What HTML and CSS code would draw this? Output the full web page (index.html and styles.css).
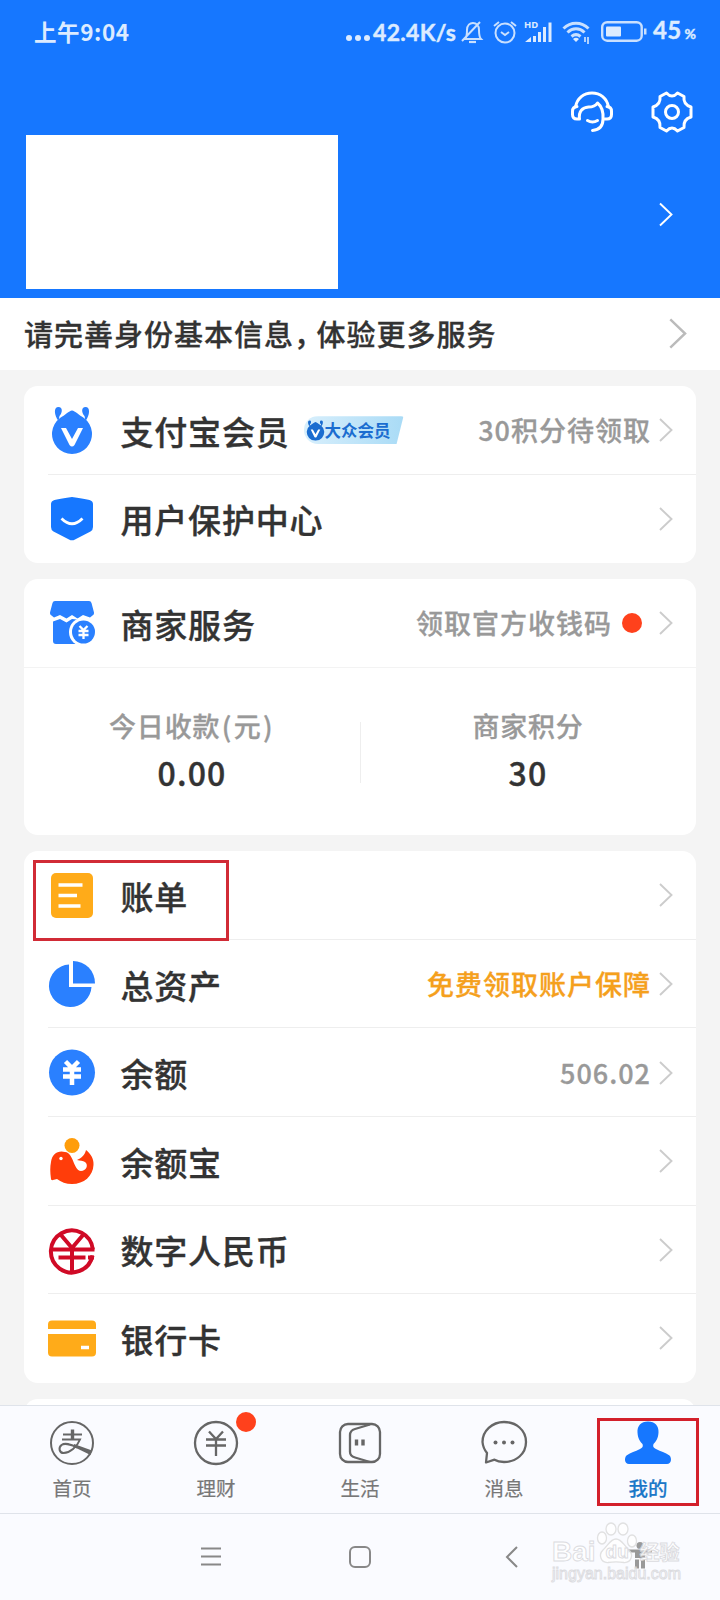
FILE: index.html
```html
<!DOCTYPE html>
<html lang="zh-CN">
<head>
<meta charset="utf-8">
<title>我的</title>
<link rel="stylesheet" href="styles.css">
</head>
<body>
<svg class="defs" width="0" height="0">
  <symbol id="chev" viewBox="0 0 14 24"><path d="M1 1l11.500 11L1 23" fill="none" stroke="currentColor" stroke-width="1.900"/></symbol>
  <symbol id="ant" viewBox="0 0 48 48"><path d="M10.500 15C6 9 5.500 1 10.500 1c4.500 0 4 6 1 9zM37.500 15c4.500-6 5-14 0-14-4.500 0-4 6-1 9z" fill="currentColor"/><path d="M24 4.500C27 5 31 9 36 12a20 20 0 1 1-24 0C17 9 21 5 24 4.500z" fill="currentColor"/><path d="M13 22h5l6 11 6-11h5l-8.500 17q-2.500 3-5 0z" fill="#fff"/></symbol>
</svg>
<div class="phone">
  <header class="header">
    <div class="status">
      <span class="time">上午9:04</span>
      <svg class="dots" width="24" height="8"><g fill="#dcebff"><circle cx="3" cy="4" r="3"/><circle cx="12" cy="4" r="3"/><circle cx="21" cy="4" r="3"/></g></svg>
      <span class="speed">42.4K/s</span>
      <svg class="st-bell" width="22" height="24" viewBox="0 0 22 24" fill="none" stroke="#c9e0ff" stroke-width="2"><path d="M4 19h16c-2-2-2-5-2-9 0-5-3-7-6-7S6 5 6 10c0 4 0 7-2 9zM1 21L19 2"/><path d="M8 22h7" stroke-width="2.200"/></svg>
      <svg class="st-alarm" width="24" height="24" viewBox="0 0 24 24" fill="none" stroke="#c9e0ff" stroke-width="2"><circle cx="12" cy="13" r="9.500"/><path d="M8 12l4 3 4-3M1 6l5-4M23 6l-5-4"/></svg>
      <svg class="st-signal" width="28" height="24" viewBox="0 0 28 24"><text x="0" y="8" class="hd">HD</text><path d="M1 22l6-5v5zM9 16h3v6H9zM14 12h3v10h-3zM19 7h3v15h-3zM24.500 2.500h3V22h-3z" fill="#dcebff"/></svg>
      <svg class="st-wifi" width="30" height="24" viewBox="0 0 30 24" fill="none" stroke="#c9e0ff" stroke-width="3"><path d="M1.500 8.500c7-7 18-7 25 0M5.500 12.500c5-5 12-5 17 0M9.500 16.500c3-2.500 6-2.500 9 0"/><path d="M14 22l-3-3c2-1.600 4-1.600 6 0z" fill="#dcebff" stroke="none"/><path d="M23 17v5M26 17v7" stroke-width="1.700"/></svg>
      <svg class="st-batt" width="46" height="22" viewBox="0 0 46 22"><rect x="1.200" y="1.200" width="39.500" height="18.500" rx="5" fill="none" stroke="#c9e0ff" stroke-width="2.400"/><rect x="5" y="5.500" width="15" height="10" rx="1" fill="#dcebff"/><path d="M43 7.500h2.500v6H43z" fill="#c9e0ff"/></svg>
      <span class="pct">45<small>%</small></span>
    </div>
    <div class="tools">
      <svg width="42" height="42" viewBox="0 0 42 42" fill="none" stroke="#fff" stroke-width="3" stroke-linecap="round" stroke-linejoin="round"><path d="M4.500 16C6 7 13 2 21 2s15 5 16.500 14"/><path d="M6 15.500q-4.500 0-4.500 5v3q0 4.500 4.500 4.500h2.500c-1-8 3-11.500 9-12 4 0 7-1 9-4 5 4 6 9 5.500 16 0 7-4 11-10.500 11.500"/><path d="M33.500 28h2.500q4.500 0 4.500-4.500v-3q0-5-4.500-5"/><path d="M16.500 29.500q5 3 10 0"/></svg>
      <svg width="42" height="42" viewBox="0 0 42 42" fill="none" stroke="#fff" stroke-width="3" stroke-linejoin="round"><path d="M15.500 2Q21 8 26.500 2L33 5.500Q32 13.500 40 16V26Q32 28.500 33 36.500L26.500 40Q21 34 15.500 40L9 36.500Q10 28.500 2 26V16Q10 13.500 9 5.500Z"/><circle cx="21" cy="21" r="6.500"/></svg>
    </div>
    <div class="profile">
      <div class="mask"></div>
      <svg class="pchev" width="14" height="25"><use href="#chev"/></svg>
    </div>
  </header>

  <div class="notice"><span>请完善身份基本信息<i class="comma">，</i>体验更多服务</span><svg width="18" height="31"><use href="#chev"/></svg></div>

  <main class="content">
    <section class="card">
      <div class="row">
        <svg class="ico blue" width="48" height="48"><use href="#ant"/></svg>
        <span class="title">支付宝会员</span>
        <span class="badge"><svg width="19" height="20" viewBox="4 0 40 46"><use href="#ant" width="48" height="48"/></svg>大众会员</span>
        <span class="value">30积分待领取</span><svg class="chev" width="14" height="24"><use href="#chev"/></svg>
      </div>
      <div class="row">
        <svg class="ico" width="48" height="48" viewBox="0 0 48 48"><path d="M24 2C31 3 37 4 41.500 5q3.500 1 3.500 4v23q0 3-2.500 4.500L27 44.500q-3 1.700-6 0L5.500 36.500Q3 35 3 32V9q0-3 3.500-4C11 4 17 3 24 2z" fill="#1677ff"/><path d="M13.500 23.500q10.500 10.500 21 0" fill="none" stroke="#fff" stroke-width="2.800"/></svg>
        <span class="title">用户保护中心</span><svg class="chev end" width="14" height="24"><use href="#chev"/></svg>
      </div>
    </section>

    <section class="card">
      <div class="row">
        <svg class="ico" width="48" height="48" viewBox="0 0 48 48"><path d="M7 2h34q2 0 2.500 2L46 13.500q.5 2-1.500 3L42 18.500 35 16l-5.500 3.500L24 16l-5.500 3.500L12 16l-6 2.500-2.500-2q-2-1-1.500-3L4.500 4Q5 2 7 2z" fill="#2a80ff"/><path d="M5 22.500l7-2.500 6.500 3.500 5.500-3.500 18 2v23H8q-3 0-3-3z" fill="#2a80ff"/><circle cx="35.500" cy="33" r="14.500" fill="#fff"/><circle cx="35.500" cy="33" r="11.500" fill="#2a80ff"/><path d="M24 20l5.500 3.500L35 20l7 2.500" fill="none" stroke="#2a80ff" stroke-width="0"/><path d="M31.500 27l4 4 4-4M30.500 32h10M30.500 36h10M35.500 31v9" fill="none" stroke="#fff" stroke-width="2.300"/></svg>
        <span class="title">商家服务</span>
        <span class="value">领取官方收钱码</span><b class="dot"></b><svg class="chev far" width="14" height="24"><use href="#chev"/></svg>
      </div>
      <div class="stats">
        <div class="stat"><span class="label">今日收款<i class="paren">(</i>元<i class="paren">)</i></span><span class="num">0.00</span></div>
        <div class="stat"><span class="label">商家积分</span><span class="num">30</span></div>
      </div>
    </section>

    <section class="card">
      <div class="row marked">
        <svg class="ico" width="48" height="48" viewBox="0 0 48 48"><rect x="3" y="2" width="42" height="45" rx="5" fill="#ffab19"/><path d="M10.500 14h24M10.500 24.500h18.500M10.500 35h22" stroke="#fff" stroke-width="3.600"/></svg>
        <span class="title">账单</span><svg class="chev end" width="14" height="24"><use href="#chev"/></svg>
      </div>
      <div class="row">
        <svg class="ico" width="48" height="48" viewBox="0 0 48 48" fill="#2a80ff"><path d="M21 4.500A21.300 21.300 0 1 0 43.500 27H21z"/><path d="M25 1a22 22 0 0 1 22 22.500H25z"/></svg>
        <span class="title">总资产</span><span class="value gold">免费领取账户保障</span><svg class="chev" width="14" height="24"><use href="#chev"/></svg>
      </div>
      <div class="row">
        <svg class="ico" width="48" height="48" viewBox="0 0 48 48"><circle cx="24" cy="23.500" r="23" fill="#2a80ff"/><path d="M17.500 12.500L24 19l6.500-6.500M15 20.500h18M15 27.500h18M24 18v18" fill="none" stroke="#fff" stroke-width="4.500"/></svg>
        <span class="title">余额</span><span class="value">506.02</span><svg class="chev" width="14" height="24"><use href="#chev"/></svg>
      </div>
      <div class="row">
        <svg class="ico" width="48" height="48" viewBox="0 0 48 48"><path d="M3 42C2 35 2 30 3 25 4 17 10 13 17 15c9 1 8 18 16 19 5 0 8-6 4-9-2-1.500-5-1-8-2 4-1.500 8-5 9-10 5 4 8 9 7.500 15C45 39 36 47 24 47c-6 0-11-2-15-5l-4 1q-2 .500-2-1z" fill="#ff3d0a"/><circle cx="24" cy="8.500" r="7.500" fill="#ff9d0a"/><circle cx="13" cy="21.500" r="1.700" fill="#fff"/></svg>
        <span class="title">余额宝</span><svg class="chev end" width="14" height="24"><use href="#chev"/></svg>
      </div>
      <div class="row">
        <svg class="ico" width="48" height="48" viewBox="0 0 48 48" fill="none" stroke="#d00a26" stroke-width="4"><path d="M44.800 23.500A21 21 0 1 0 44.500 29.500"/><path d="M13 9l11 13L35 9M24 20v25M4 23.500h42.500M10.500 31.500h27M40 31.500h6" stroke-width="4"/></svg>
        <span class="title">数字人民币</span><svg class="chev end" width="14" height="24"><use href="#chev"/></svg>
      </div>
      <div class="row">
        <svg class="ico" width="48" height="48" viewBox="0 0 48 48"><path d="M4 6.500h40q4 0 4 4V15H0v-4.500q0-4 4-4zM0 20h48v18.500q0 4-4 4H4q-4 0-4-4z" fill="#ffab19"/><path d="M33 33.500h8" stroke="#fff" stroke-width="3.500"/></svg>
        <span class="title">银行卡</span><svg class="chev end" width="14" height="24"><use href="#chev"/></svg>
      </div>
    </section>
    <section class="card peek"></section>
  </main>

  <nav class="tabs">
    <div class="tab"><svg width="48" height="48" viewBox="0 0 48 48" fill="none" stroke="#666" stroke-width="2"><circle cx="24" cy="24" r="21"/><path d="M15 15.500h19" stroke-width="2"/><path d="M24.500 10.500v10" stroke-width="3.400"/><path d="M14 20.500h18C29 28 22 34 15.500 34c-4 0-5.500-5-2-8 4-3 10 0 16 2.500" stroke-width="2"/><path d="M26 25l18 6.500-1.500 4.500L26 28z" fill="#666" stroke="none"/></svg><span>首页</span></div>
    <div class="tab"><svg width="48" height="48" viewBox="0 0 48 48" fill="none" stroke="#666" stroke-width="2.300"><circle cx="24" cy="24" r="21"/><path d="M17 12.500l7 7.500 7-7.500M14 20.500h20M14 26.500h20M24 20v17"/></svg><b class="dot"></b><span>理财</span></div>
    <div class="tab"><svg width="48" height="48" viewBox="0 0 48 48" fill="none" stroke="#666" stroke-width="2.300" stroke-linejoin="round"><rect x="4" y="5" width="40" height="38" rx="8"/><path d="M34 5.500l-15 4.500q-5 1.500-5 6v17q0 4 5 5.500l15 4.500"/><path d="M20.500 20.500v6M27 20.500v6" stroke-width="3.400"/></svg><span>生活</span></div>
    <div class="tab"><svg width="48" height="48" viewBox="0 0 48 48" fill="none" stroke="#666" stroke-width="2.300" stroke-linejoin="round"><path d="M6 43.500l1-9.500a20 20 0 0 1-4.500-11C2.500 12 12 3 24 3s22 8 22 20-10 20-22 20c-4 0-7-.7-9.500-2.300z"/><g fill="#666" stroke="none"><circle cx="15.500" cy="23.500" r="2"/><circle cx="24" cy="23.500" r="2"/><circle cx="32.500" cy="23.500" r="2"/></g></svg><span>消息</span></div>
    <div class="tab active"><svg width="48" height="48" viewBox="0 0 48 48"><path d="M24 2.500c7 0 11 4.500 10.500 11-.3 6-2.500 9-5 11.500-.8 3 0 3.500 2.500 5 5 2.500 9 3.500 13.500 6.500 2.500 2.500 2 8.500-2.500 8.500H5C.5 45 0 39 2.500 36.500 7 33.500 11 32.500 16 30c2.500-1.500 3.300-2 2.500-5-2.500-2.500-4.700-5.500-5-11.500C13 7 17 2.500 24 2.500z" fill="#1677ff"/></svg><span>我的</span></div>
  </nav>

  <footer class="sysnav">
    <svg class="menu" width="22" height="22" viewBox="0 0 22 22" stroke="#888" stroke-width="2"><path d="M1 2.500h20M1 10.500h20M1 18.500h20"/></svg>
    <svg class="home" width="22" height="22" viewBox="0 0 22 22"><rect x="1" y="1" width="20" height="20" rx="5" fill="none" stroke="#888" stroke-width="2"/></svg>
    <svg class="back" width="12" height="22" viewBox="0 0 12 22" fill="none" stroke="#888" stroke-width="2"><path d="M11 1L1 11l10 10"/></svg>
    <svg class="man" width="26" height="28" viewBox="0 0 26 28" fill="#999"><circle cx="13" cy="4.500" r="3.500"/><path d="M1 8.500h24v3h-7v5.500H8v-5.500H1zM8 18.500h4v9H8zM14 18.500h4v9h-4z"/></svg>
    <div class="mark">
      <svg class="paw" width="42" height="42" viewBox="0 0 42 42" fill="#fff" stroke="#ddd" stroke-width="1.300"><ellipse cx="6" cy="16" rx="4.500" ry="6"/><ellipse cx="15" cy="7" rx="5" ry="6"/><ellipse cx="27" cy="7" rx="5" ry="6"/><ellipse cx="36" cy="19" rx="4.500" ry="6"/><path d="M20 17c6 0 8 7 13 11 5 5 2 13-5 12.500-6-1-10-1-16 0-7 .5-10-7.500-5-12.500 5-4 7-11 13-11z"/></svg>
      <div class="logo"><span>Bai</span><em>du</em><span class="cn">经验</span></div>
      <div class="url">jingyan.baidu.com</div>
    </div>
  </footer>
</div>
</body>
</html>
```

FILE: styles.css
```css
*, *::before, *::after { box-sizing: border-box; }
body { margin: 0; font-family: "Noto Sans CJK SC", "Noto Sans", sans-serif; color: #333; font-weight: 500; }
svg { display: block; flex: none; overflow: visible; }
i, em { font-style: normal; }
.defs { position: absolute; }
.phone { width: 720px; height: 1600px; overflow: hidden; background: #f4f4f4; display: flex; flex-direction: column; }

.header { height: 298px; flex: none; background: #1677ff; }
.status { height: 64px; padding-left: 34px; display: flex; align-items: center; color: #dcebff; font-weight: 700; line-height: 30px; }
.time { width: 312px; font-size: 22.500px; letter-spacing: .6px; white-space: nowrap; padding-bottom: 2px; }
.dots { margin-top: 12px; }
.speed { width: 84px; margin-left: 3px; font-family: Lato, sans-serif; font-size: 23px; letter-spacing: .3px; -webkit-text-stroke: .4px; white-space: nowrap; }
.st-bell { margin-left: 4px; }
.st-alarm { margin-left: 10px; }
.st-signal { margin-left: 7px; }
.hd { font: 700 9.500px "Noto Sans", sans-serif; fill: #dcebff; }
.st-wifi { margin-left: 10px; }
.st-batt { margin-left: 9px; }
.pct { margin-left: 6px; font-family: Lato, sans-serif; font-size: 24px; letter-spacing: .3px; -webkit-text-stroke: .4px; white-space: nowrap; }
.pct small { font-size: 14px; margin-left: 3px; }
.tools { display: flex; justify-content: flex-end; gap: 38px; height: 71px; padding: 27px 27px 0 0; }
.profile { display: flex; justify-content: space-between; align-items: center; padding: 0 47px 0 26px; color: #fff; }
.mask { width: 312px; height: 154px; background: #fff; }
.pchev { margin-top: 4px; }

.notice { height: 72px; flex: none; background: #fff; padding: 0 33px 2px 24px; display: flex; align-items: center; justify-content: space-between; font-size: 29px; letter-spacing: 1px; line-height: 40px; -webkit-text-stroke: .3px; }
.notice svg { color: #bbb; }
.comma { font-feature-settings: "halt"; margin-right: 7px; }

.content { height: 1035px; flex: none; overflow: hidden; padding: 16px 24px 0; display: flex; flex-direction: column; gap: 16px; }
.card { background: #fff; border-radius: 14px; flex: none; }
.row { height: 88.6px; position: relative; display: flex; align-items: center; padding: 0 23px 0 24px; }
.row + .row::before { content: ""; position: absolute; left: 24px; right: 0; top: -1px; height: 1px; background: #eee; }
.blue { color: #2a80ff; }
.title { margin-left: 24.500px; font-size: 33px; letter-spacing: .8px; line-height: 48px; padding-top: 1px; -webkit-text-stroke: .35px; white-space: nowrap; }
.value { margin-left: auto; font-size: 27px; letter-spacing: 1px; line-height: 40px; color: #999; -webkit-text-stroke: .3px; white-space: nowrap; }
.gold { color: #f5a01d; }
.chev { margin-left: 8px; color: #ccc; }
.chev.end { margin-left: auto; }
.chev.far { margin-left: 17px; }
.dot { display: block; width: 20px; height: 20px; border-radius: 50%; background: #ff411c; }
.row .dot { margin-left: 10px; }
.badge { margin-left: 14px; width: 100px; height: 28px; padding-left: 2px; display: flex; align-items: center; color: #1b6dd0; font-size: 16.500px; font-weight: 700; white-space: nowrap; background: linear-gradient(90deg, #d8effc, #a9dbf6); border-radius: 14px 3px 3px 14px; clip-path: polygon(0 0, 100% 0, 93% 100%, 0 100%); }
.stats { height: 167.400px; display: flex; position: relative; }
.stats::before { content: ""; position: absolute; left: 0; right: 0; top: -1px; height: 1px; background: #f3f3f3; }
.stats::after { content: ""; position: absolute; left: 336px; top: 54px; width: 1px; height: 61px; background: #eee; }
.stat { flex: 1; display: flex; flex-direction: column; align-items: center; padding-top: 38px; }
.label { font-size: 27px; letter-spacing: .8px; line-height: 40px; color: #999; -webkit-text-stroke: .3px; }
.paren { margin: 0 1.500px; }
.num { font-size: 32px; letter-spacing: 1.200px; line-height: 48px; margin-top: 2px; -webkit-text-stroke: .4px; }
.marked::after { content: ""; position: absolute; left: 9px; top: 9px; width: 196px; height: 81px; border: 3px solid #d12b36; z-index: 1; }
.peek { height: 80px; }

.tabs { height: 108px; flex: none; border-top: 1px solid #dfe3ea; background: #fafbff; display: flex; }
.tab { flex: 1; position: relative; display: flex; flex-direction: column; align-items: center; padding-top: 13px; font-size: 19.500px; line-height: 28px; color: #777; font-weight: 400; -webkit-text-stroke: .2px; }
.tab span { margin-top: 7px; }
.tab .dot { position: absolute; left: 92px; top: 6px; }
.tab.active { color: #1b78c8; font-weight: 500; }
.tab.active::after { content: ""; position: absolute; left: 21px; top: 12px; width: 102px; height: 88px; border: 3px solid #d3202b; }

.sysnav { height: 87px; flex: none; border-top: 1px solid #dfe3ea; background: #fafbff; display: flex; padding-top: 32px; position: relative; }
.menu { margin-left: 200px; }
.home { margin-left: 127px; }
.back { margin-left: 135px; }
.man { margin-left: 109px; margin-top: -5px; }
.mark { position: absolute; left: 552px; top: 7px; width: 130px; color: #fff; -webkit-text-stroke: .9px #d6d6da; opacity: .85; }
.paw { position: absolute; left: 44px; top: 1px; }
.logo { position: relative; display: flex; align-items: center; padding-top: 15px; height: 47px; font: 700 28px/30px "Liberation Sans", sans-serif; }
.logo em { font-size: 19px; margin-left: 10px; width: 34px; }
.cn { font: 700 20px/30px "Noto Sans CJK SC", sans-serif; }
.url { font: 400 16px/18px "Liberation Sans", sans-serif; margin-top: -3px; }
```
